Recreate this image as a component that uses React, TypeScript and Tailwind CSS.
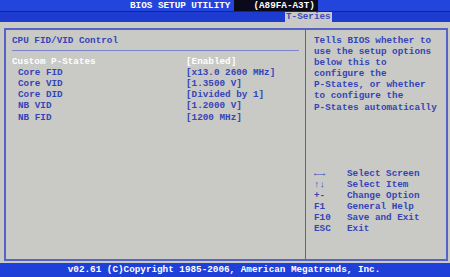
import React from "react";

const settings = [
  { label: "Custom P-States", value: "[Enabled]", active: true },
  { label: "Core FID", value: "[x13.0 2600 MHz]", sub: true },
  { label: "Core VID", value: "[1.3500 V]", sub: true },
  { label: "Core DID", value: "[Divided by 1]", sub: true },
  { label: "NB VID", value: "[1.2000 V]", sub: true },
  { label: "NB FID", value: "[1200 MHz]", sub: true },
];

const helpLines = [
  "Tells BIOS whether to",
  "use the setup options",
  "below this to",
  "configure the",
  "P-States, or whether",
  "to configure the",
  "P-States automatically",
];

const keys = [
  { key: "\u2190\u2192", desc: "Select Screen" },
  { key: "\u2191\u2193", desc: "Select Item" },
  { key: "+-", desc: "Change Option" },
  { key: "F1", desc: "General Help" },
  { key: "F10", desc: "Save and Exit" },
  { key: "ESC", desc: "Exit" },
];

export default function App() {
  return (
    <div
      className="w-[450px] h-[277px] flex flex-col overflow-hidden bg-[#c9c9c5] text-[9.3px] leading-[11.1px] font-bold"
      style={{ fontFamily: '"Liberation Mono", "DejaVu Sans Mono", monospace' }}
    >
      {/* title bar */}
      <div className="h-[11px] bg-[#2445dc] flex items-center text-white">
        <span className="ml-[130px] whitespace-pre">BIOS SETUP UTILITY</span>
        <span className="ml-[4px] h-full bg-[#0a0a1a] pl-[19px] pr-[3px] flex items-center">(A89FA-A3T)</span>
      </div>
      {/* tab strip */}
      <div className="h-[11px] bg-[#1d3ccf] border-t border-[#12248a] flex items-end">
        <span className="ml-[285px] h-[10px] px-[1px] bg-[#c9c9c5] text-[#3c4cc0] flex items-center">T-Series</span>
      </div>
      {/* body */}
      <div className="flex-1 pt-[6px] pl-[4px] pr-[2px] pb-[2px] bg-[#c9c9c5]">
        <div className="h-full border-2 border-double border-[#5563c8] flex">
          <div className="w-[300px] border-r border-[#4f5ec8] pt-[5px] text-[#3445b8]">
            <div className="pl-[6px]">CPU FID/VID Control</div>
            <div className="ml-[6px] mr-[6px] mt-[4px] mb-[5px] h-px bg-[#7a86cc]" />
            {settings.map((s) => (
              <div key={s.label} className={`flex ${s.active ? "text-white" : ""}`}>
                <span className={`w-[180px] ${s.sub ? "pl-[12px]" : "pl-[6px]"}`}>{s.label}</span>
                <span>{s.value}</span>
              </div>
            ))}
          </div>
          <div className="flex-1 flex flex-col pl-[8px] pt-[5px] text-[#3445b8]">
            {helpLines.map((l) => (
              <div key={l} className="whitespace-pre">{l}</div>
            ))}
            <div className="mt-[55px]">
              {keys.map((k) => (
                <div key={k.key} className="flex">
                  <span className="w-[33px]">{k.key}</span>
                  <span>{k.desc}</span>
                </div>
              ))}
            </div>
          </div>
        </div>
      </div>
      {/* footer */}
      <div className="h-[14px] bg-[#1f40d8] text-white flex items-center justify-center">
        <span className="ml-[-2px]">v02.61 (C)Copyright 1985-2006, American Megatrends, Inc.</span>
      </div>
    </div>
  );
}
